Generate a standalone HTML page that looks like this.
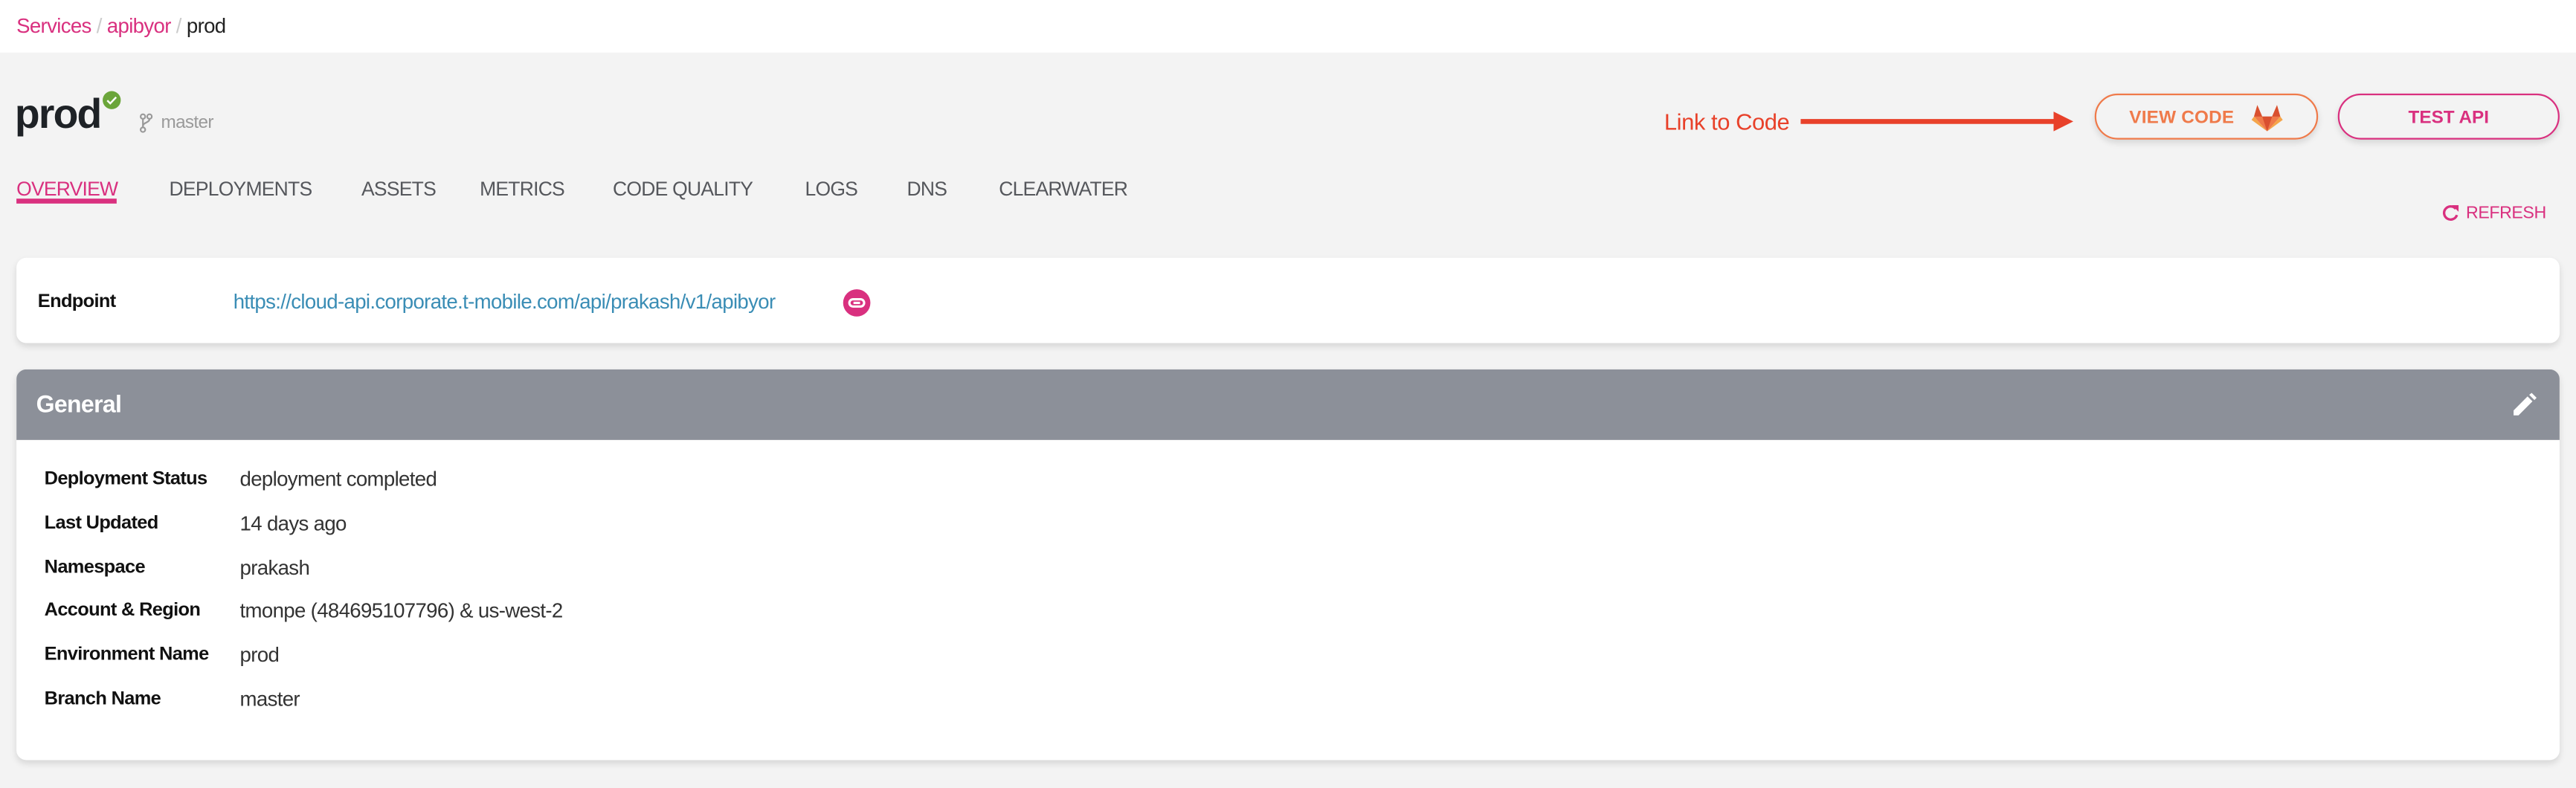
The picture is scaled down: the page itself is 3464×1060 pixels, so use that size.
<!DOCTYPE html>
<html><head><meta charset="utf-8"><style>
*{margin:0;padding:0;box-sizing:border-box}
html,body{width:3464px;height:1060px;overflow:hidden;background:#f3f3f3}
#w{position:absolute;left:0;top:0;width:1568px;height:480px;transform:scale(2.2092,2.2083);transform-origin:0 0;font-family:"Liberation Sans",sans-serif;background:#f3f3f3}
.a{position:absolute;white-space:nowrap}
.top{position:absolute;left:0;top:0;width:1568px;height:32px;background:#fff}
.pink{color:#d9307f}
.tab{position:absolute;top:108px;font-size:12px;color:#55575c;letter-spacing:-0.35px}
.card{position:absolute;left:10px;width:1548px;background:#fff;border-radius:6px;box-shadow:0 2px 4px rgba(0,0,0,.12)}
.lbl{position:absolute;left:17px;font-size:11.5px;font-weight:bold;color:#111;letter-spacing:-0.3px}
.val{position:absolute;left:136px;font-size:12.5px;color:#333;letter-spacing:-0.3px}
.btn{position:absolute;top:57px;height:28px;border-radius:14px;border:1.5px solid;font-size:11px;font-weight:bold;text-align:center;line-height:25px;padding-top:2px;box-shadow:0 2px 4px rgba(0,0,0,.12)}
</style></head><body><div id="w">
<div class="top"></div>
<div class="a" style="left:10px;top:9px;font-size:12.5px;letter-spacing:-0.3px"><span class="pink">Services</span> <span style="color:#ccc">/</span> <span class="pink">apibyor</span> <span style="color:#ccc">/</span> <span style="color:#222">prod</span></div>

<div class="a" style="left:9px;top:56px;font-size:25px;font-weight:bold;color:#1e2226;letter-spacing:-0.8px">prod</div>
<svg class="a" style="left:62px;top:55px" width="12" height="12" viewBox="0 0 12 12"><circle cx="6" cy="6" r="5.5" fill="#6ba53a"/><path d="M3.3 6.2l1.8 1.8 3.6-3.8" stroke="#fff" stroke-width="1.1" fill="none"/></svg>
<svg class="a" style="left:85px;top:69px" width="8" height="12" viewBox="0 0 8 12"><g stroke="#999" stroke-width="1" fill="none"><circle cx="2" cy="2" r="1.4"/><circle cx="6" cy="2" r="1.4"/><circle cx="2" cy="10" r="1.4"/><path d="M2 3.4v5.2M6 3.4c0 2.5-4 2-4 4.5"/></g></svg>
<div class="a" style="left:98px;top:69px;font-size:11px;color:#9a9a9a;letter-spacing:-0.3px">master</div>

<div class="tab" style="left:10px;color:#d9307f">OVERVIEW</div>
<div class="a" style="left:10px;top:121px;width:61px;height:3px;background:#d9307f"></div>
<div class="tab" style="left:103px">DEPLOYMENTS</div>
<div class="tab" style="left:220px">ASSETS</div>
<div class="tab" style="left:292px">METRICS</div>
<div class="tab" style="left:373px">CODE QUALITY</div>
<div class="tab" style="left:490px">LOGS</div>
<div class="tab" style="left:552px">DNS</div>
<div class="tab" style="left:608px">CLEARWATER</div>

<div class="a" style="left:1013px;top:66px;font-size:14px;color:#e8412a;letter-spacing:-0.2px">Link to Code</div>
<svg class="a" style="left:1096px;top:67px" width="170" height="14" viewBox="0 0 170 14"><rect x="0" y="5.5" width="156" height="3" fill="#e8412a"/><path d="M154 1l12 6-12 6z" fill="#e8412a"/></svg>

<div class="btn" style="left:1275px;width:136px;border-color:#ef7a4a;color:#ef7a4a;padding-right:30px;letter-spacing:.1px">VIEW CODE</div>
<svg class="a" style="left:1370px;top:63px" width="20" height="18" viewBox="0 0 20 18"><path d="M10 17L2 8 4 1l3 7h6l3-7 2 7z" fill="#ef7a4a"/><path d="M10 17L7 8h6z" fill="#d9502f"/><path d="M2 8l8 9L0.5 10z M18 8l-8 9 9.5-7z" fill="#f5a54a"/><path d="M4 1l3 7H2z M16 1l-3 7h5z" fill="#d9502f"/></svg>
<div class="btn" style="left:1423px;width:135px;border-color:#d9307f;color:#d9307f">TEST API</div>

<svg class="a" style="left:1486px;top:124px" width="11" height="12" viewBox="0 0 11 12"><path d="M8.8 3.2A4 4 0 1 0 9.5 7" stroke="#d9307f" stroke-width="1.5" fill="none"/><path d="M6.5 1h4v4z" fill="#d9307f"/></svg>
<div class="a pink" style="left:1501px;top:124px;font-size:10.5px;letter-spacing:-0.2px">REFRESH</div>

<div class="card" style="top:157px;height:52px">
<div class="lbl" style="left:13px;top:21px">Endpoint</div>
<div class="val" style="left:132px;top:20px;color:#3a8db5">https://cloud-api.corporate.t-mobile.com/api/prakash/v1/apibyor</div>
<svg class="a" style="left:503px;top:19px" width="17" height="17" viewBox="0 0 17 17"><circle cx="8.5" cy="8.5" r="8.3" fill="#d9307f"/><rect x="4" y="6.3" width="9" height="4.4" rx="2.2" stroke="#fff" stroke-width="1.4" fill="none"/><path d="M6.5 8.5h4" stroke="#fff" stroke-width="1.4"/></svg>
</div>

<div class="card" style="top:225px;height:238px;overflow:hidden">
<div style="position:absolute;left:0;top:0;width:100%;height:43px;background:#8c9099"></div>
<div class="a" style="left:12px;top:14px;font-size:14.5px;font-weight:bold;color:#fff;letter-spacing:-0.3px">General</div>
<svg class="a" style="left:1519px;top:14px" width="15" height="15" viewBox="0 0 15 15"><path d="M1 14v-3l8.5-8.5 3 3L4 14z M10.5 1.5l1.5-1.2 3 3-1.3 1.4z" fill="#fff"/></svg>
<div class="lbl" style="top:61px">Deployment Status</div><div class="val" style="top:60px">deployment completed</div>
<div class="lbl" style="top:88px">Last Updated</div><div class="val" style="top:87px">14 days ago</div>
<div class="lbl" style="top:115px">Namespace</div><div class="val" style="top:114px">prakash</div>
<div class="lbl" style="top:141px">Account &amp; Region</div><div class="val" style="top:140px">tmonpe (484695107796) &amp; us-west-2</div>
<div class="lbl" style="top:168px">Environment Name</div><div class="val" style="top:167px">prod</div>
<div class="lbl" style="top:195px">Branch Name</div><div class="val" style="top:194px">master</div>
</div>
</div></body></html>
